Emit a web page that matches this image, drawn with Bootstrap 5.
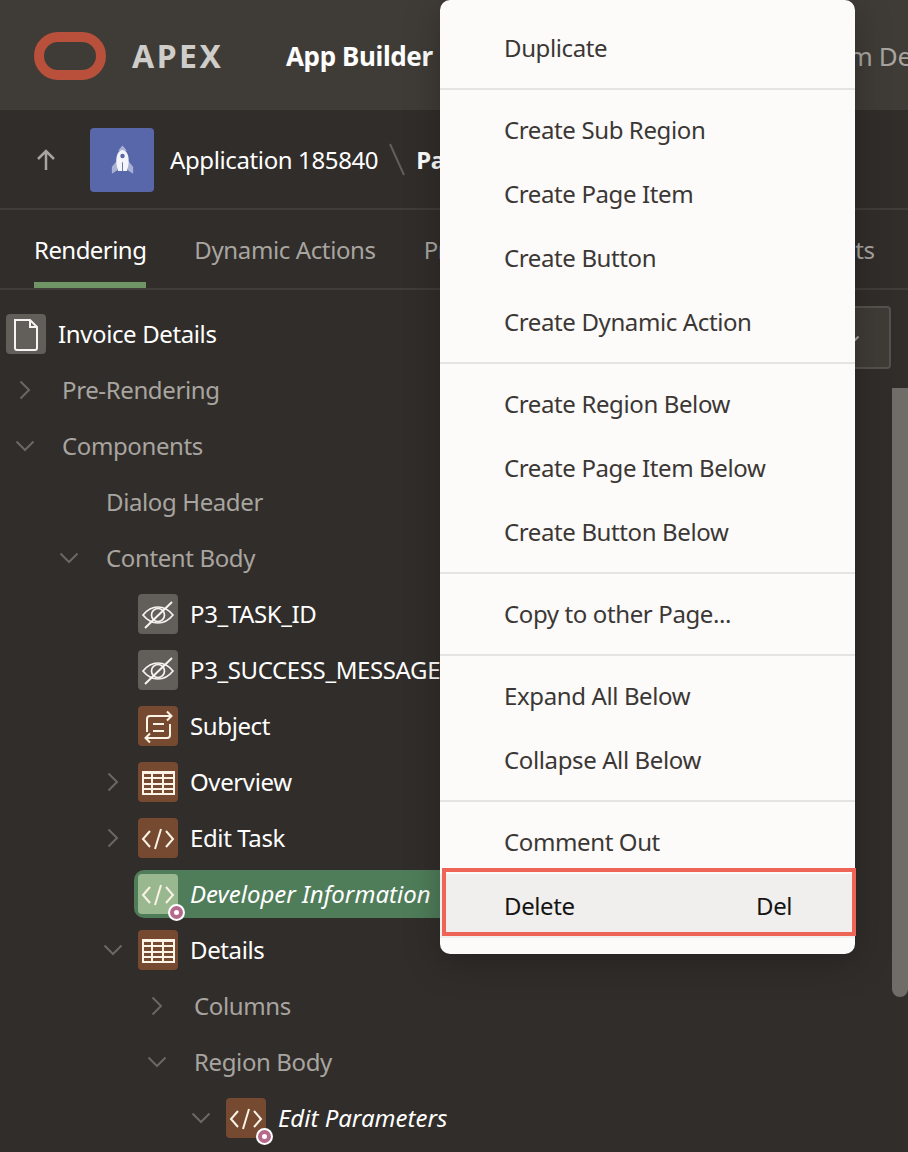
<!DOCTYPE html>
<html lang="en">

<head>
    <meta charset="UTF-8" />
    <meta name="viewport" content="width=device-width, initial-scale=1" />
    <title>APEX Page Designer</title>
    <link href="https://cdn.jsdelivr.net/npm/bootstrap@5.3.2/dist/css/bootstrap.min.css" rel="stylesheet" />
    <style>
        body,
        html {
            margin: 0;
            height: 1152px;
            overflow: hidden;
            background: #312d2a;
        }

        body {
            font-family: "Noto Sans", "Open Sans", sans-serif;
            font-size: 24px;
            letter-spacing: -.38px;
        }

        .page-wrap {
            height: 1152px;
            overflow: hidden;
        }

        .top-bar {
            height: 110px;
            background: #3f3c37;
            padding: 2px 0 0 34px;
            white-space: nowrap;
        }

        .top-bar > * {
            flex: none;
        }

        .apex-name {
            margin-left: 26px;
            font-size: 32px;
            font-weight: 700;
            letter-spacing: 2.500px;
            color: #cfcdc9;
            width: 154px;
        }

        .top-link {
            font-size: 26px;
            font-weight: 700;
            color: #fff;
        }

        .top-link-muted {
            font-size: 26px;
            color: #a8a5a0;
            margin-left: 375px;
        }

        .crumb-bar {
            height: 100px;
            padding-top: 2px;
            border-bottom: 2px solid #403d39;
            white-space: nowrap;
            color: #fff;
        }

        .up-arrow {
            width: 90px;
            padding-left: 36px;
        }

        .app-tile {
            width: 64px;
            height: 64px;
            background: #5867a9;
            border-radius: 4px;
            margin-right: 16px;
        }

        .crumb-slash {
            margin: 0 10px;
        }

        .tab-bar {
            height: 80px;
            padding: 0 34px;
            gap: 48px;
            border-bottom: 2px solid #403d39;
            white-space: nowrap;
        }

        .tab-item {
            color: #a8a5a0;
            height: 78px;
            line-height: 80px;
        }

        .tab-active {
            color: #fff;
            border-bottom: 6px solid #6f9566;
            height: 78px;
            letter-spacing: -.55px;
        }

        .tree-row {
            height: 56px;
            white-space: nowrap;
            color: #fff;
        }

        .tree-row-muted {
            color: #a8a5a0;
        }

        .twist {
            width: 44px;
            flex: none;
            text-align: center;
            line-height: 0;
        }

        .lvl-0 { padding-left: 3px; }
        .lvl-1 { padding-left: 47px; }
        .lvl-2 { padding-left: 91px; }
        .lvl-3 { padding-left: 135px; }
        .lvl-4 { padding-left: 179px; }

        .node-icon {
            width: 40px;
            height: 40px;
            flex: none;
            border-radius: 4px;
            margin-left: 3px;
            margin-right: 12px;
            position: relative;
        }

        .icon-page { background: #625e59; }
        .icon-brown { background: #764a30; }
        .icon-light { background: #9ab890; }

        .plain-label {
            margin-left: 15px;
        }

        .node-italic {
            font-style: italic;
            letter-spacing: 0;
        }

        .node-picked {
            height: 48px;
            width: 320px;
            flex: none;
            margin-left: -1px;
            padding-left: 1px;
            background: #4f7d5a;
            border-radius: 10px 0 0 10px;
        }

        .comment-pin {
            position: absolute;
            right: -7px;
            bottom: -7px;
            width: 17px;
            height: 17px;
            border-radius: 50%;
            background: #fff;
            padding: 2px;
        }

        .comment-pin::after {
            content: "";
            display: block;
            width: 13px;
            height: 13px;
            border-radius: 50%;
            background: #fff;
            border: 4px solid #b56a8c;
        }

        .view-select {
            width: 100px;
            height: 63px;
            margin-right: 17px;
            align-self: flex-start;
            background: #3f3c37;
            border: 2px solid #55524d;
            border-radius: 4px;
            text-align: right;
            padding: 0 29px 0 0;
            line-height: 0;
        }

        .select-chev {
            margin-top: 27px;
        }

        .tree-scroll {
            position: absolute;
            left: 892px;
            top: 388px;
            width: 16px;
            height: 609px;
            background: #706c67;
            border-radius: 0 0 8px 8px;
        }

        .action-menu.dropdown-menu {
            position: absolute;
            left: 440px;
            top: 0;
            width: 415px;
            height: 954px;
            margin: 0;
            padding: 16px 0 0;
            background: #fcfbfa;
            border: 0;
            border-radius: 10px;
            font-size: 24px;
            box-shadow: 0 8px 36px rgba(0, 0, 0, .25);
        }

        .action-menu .dropdown-item {
            height: 64px;
            padding: 0 0 0 64px;
            line-height: 64px;
            color: #3b3734;
        }

        .action-menu .dropdown-divider {
            margin: 8px 0;
            border-top: 2px solid #e5e4e2;
            opacity: 1;
        }

        .action-menu .item-marked {
            position: relative;
            background: #f0efed;
            color: #161513;
        }

        .item-marked::after {
            content: "";
            position: absolute;
            left: 2px;
            right: -1px;
            top: -6px;
            bottom: 2px;
            border: 4px solid #ee6557;
        }

        .key-hint {
            position: absolute;
            left: 316px;
        }
    </style>
</head>

<body class="position-relative">

    <svg width="0" height="0" class="position-absolute">
        <defs>
            <symbol id="chev-right" viewBox="0 0 12 20">
                <path d="M1.500 1.500 10 10l-8.500 8.500" fill="none" stroke="#6b6762" stroke-width="2" />
            </symbol>
            <symbol id="chev-down" viewBox="0 0 20 12">
                <path d="M1.500 1.500 10 10l8.500-8.500" fill="none" stroke="#6b6762" stroke-width="2" />
            </symbol>
            <symbol id="ico-eye" viewBox="0 0 40 40">
                <g fill="none" stroke="#f5f4f2" stroke-width="1.700">
                    <path d="M5 20c4-5 9-8 15-8s11 3 15 8c-4 5-9 8-15 8s-11-3-15-8z" />
                    <circle cx="20" cy="20" r="6.500" />
                    <path d="M7 33 34 7" stroke-width="2" />
                </g>
            </symbol>
            <symbol id="ico-subject" viewBox="0 0 40 40">
                <g fill="none" stroke="#fbf3e6" stroke-width="2">
                    <path d="M9 25V12q0-3 3-3h22M29 4.500 33.500 9 29 13.500" />
                    <path d="M32 17v11q0 3-3 3H7M12 26.500 7.500 31l4.500 4.500" />
                    <path d="M15 17h11M15 24h11" />
                </g>
            </symbol>
            <symbol id="ico-table" viewBox="0 0 40 40">
                <g fill="none" stroke="#fbf3e6" stroke-width="2">
                    <rect x="5" y="9" width="31" height="22" />
                    <path d="M5 15h31M5 21h31M5 26h31M14 11v20M25 11v20" />
                    <path d="M5 10h31" stroke-width="2" />
                </g>
            </symbol>
            <symbol id="ico-code" viewBox="0 0 40 40">
                <g fill="none" stroke="#fbf3e6" stroke-width="2">
                    <path d="M12 12l-7 8 7 8M28 12l7 8-7 8M23 10l-6 20" />
                </g>
            </symbol>
        </defs>
    </svg>

    <div class="page-wrap">
        <!-- header -->
        <nav class="top-bar d-flex align-items-center">
            <svg width="72" height="48" viewBox="0 0 72 48">
                <rect x="5" y="5" width="62" height="38" rx="19" fill="none" stroke="#b9503b" stroke-width="10" />
            </svg>
            <span class="apex-name">APEX</span>
            <span class="top-link">App Builder</span>
            <span class="top-link-muted">Team Development</span>
        </nav>

        <!-- breadcrumb -->
        <div class="crumb-bar d-flex align-items-center">
            <div class="up-arrow d-flex">
                <svg width="20" height="22" viewBox="0 0 20 22">
                    <path d="M10 21V2M2 10l8-8 8 8" fill="none" stroke="#a8a5a0" stroke-width="2.500" />
                </svg>
            </div>
            <div class="app-tile d-flex align-items-center justify-content-center">
                <svg width="23" height="31" viewBox="0 0 26 34">
                    <path d="M7 17 1 24v8l6-4zM19 17l6 7v8l-6-4z" fill="#a9b1d6" />
                    <path d="M13 0 8 6h10z" fill="#a9b1d6" />
                    <path d="M13 5c-4 0-7 5-7 12 0 5 1 9 2 12h10c1-3 2-7 2-12 0-7-3-12-7-12z" fill="#f4f5fb" />
                    <circle cx="13" cy="12" r="2.500" fill="#5867a9" />
                    <path d="M13 19v10" stroke="#5867a9" stroke-width="1" />
                </svg>
            </div>
            <span>Application 185840</span>
            <svg class="crumb-slash" width="18" height="34" viewBox="0 0 18 34">
                <path d="M2 1l14 31" stroke="#625e59" stroke-width="2" />
            </svg>
            <span class="fw-bold">Page 3</span>
        </div>

        <!-- tabs -->
        <div class="tab-bar d-flex">
            <div class="tab-item tab-active">Rendering</div>
            <div class="tab-item">Dynamic Actions</div>
            <div class="tab-item">Processing</div>
            <div class="tab-item">Page Shared Components</div>
        </div>

        <!-- tree -->
        <div class="tree-wrap mt-3">
            <div class="tree-row d-flex align-items-center lvl-0">
                <div class="node-icon icon-page">
                    <svg width="40" height="40" viewBox="0 0 40 40">
                        <path d="M9 5h15l7 7v21q0 2-2 2H11q-2 0-2-2zM24 5v7h7" fill="none" stroke="#f5f4f2" stroke-width="2" />
                    </svg>
                </div>
                <span>Invoice Details</span>
                <div class="btn view-select ms-auto">
                    <svg class="select-chev" width="20" height="12" viewBox="0 0 20 12">
                        <path d="M1.500 1.500 10 10l8.500-8.500" fill="none" stroke="#a8a5a0" stroke-width="2" />
                    </svg>
                </div>
            </div>
            <div class="tree-row tree-row-muted d-flex align-items-center lvl-0">
                <div class="twist"><svg width="12" height="20"><use href="#chev-right" /></svg></div>
                <span class="plain-label">Pre-Rendering</span>
            </div>
            <div class="tree-row tree-row-muted d-flex align-items-center lvl-0">
                <div class="twist"><svg width="20" height="12"><use href="#chev-down" /></svg></div>
                <span class="plain-label">Components</span>
            </div>
            <div class="tree-row tree-row-muted d-flex align-items-center lvl-1">
                <div class="twist"></div>
                <span class="plain-label">Dialog Header</span>
            </div>
            <div class="tree-row tree-row-muted d-flex align-items-center lvl-1">
                <div class="twist"><svg width="20" height="12"><use href="#chev-down" /></svg></div>
                <span class="plain-label">Content Body</span>
            </div>
            <div class="tree-row d-flex align-items-center lvl-2">
                <div class="twist"></div>
                <div class="node-icon icon-page"><svg width="40" height="40"><use href="#ico-eye" /></svg></div>
                <span>P3_TASK_ID</span>
            </div>
            <div class="tree-row d-flex align-items-center lvl-2">
                <div class="twist"></div>
                <div class="node-icon icon-page"><svg width="40" height="40"><use href="#ico-eye" /></svg></div>
                <span>P3_SUCCESS_MESSAGE</span>
            </div>
            <div class="tree-row d-flex align-items-center lvl-2">
                <div class="twist"></div>
                <div class="node-icon icon-brown"><svg width="40" height="40"><use href="#ico-subject" /></svg></div>
                <span>Subject</span>
            </div>
            <div class="tree-row d-flex align-items-center lvl-2">
                <div class="twist"><svg width="12" height="20"><use href="#chev-right" /></svg></div>
                <div class="node-icon icon-brown"><svg width="40" height="40"><use href="#ico-table" /></svg></div>
                <span>Overview</span>
            </div>
            <div class="tree-row d-flex align-items-center lvl-2">
                <div class="twist"><svg width="12" height="20"><use href="#chev-right" /></svg></div>
                <div class="node-icon icon-brown"><svg width="40" height="40"><use href="#ico-code" /></svg></div>
                <span>Edit Task</span>
            </div>
            <div class="tree-row d-flex align-items-center lvl-2">
                <div class="twist"></div>
                <div class="node-picked d-flex align-items-center">
                    <div class="node-icon icon-light">
                        <svg width="40" height="40"><use href="#ico-code" /></svg>
                        <span class="comment-pin"></span>
                    </div>
                    <span class="node-italic">Developer Information</span>
                </div>
            </div>
            <div class="tree-row d-flex align-items-center lvl-2">
                <div class="twist"><svg width="20" height="12"><use href="#chev-down" /></svg></div>
                <div class="node-icon icon-brown"><svg width="40" height="40"><use href="#ico-table" /></svg></div>
                <span>Details</span>
            </div>
            <div class="tree-row tree-row-muted d-flex align-items-center lvl-3">
                <div class="twist"><svg width="12" height="20"><use href="#chev-right" /></svg></div>
                <span class="plain-label">Columns</span>
            </div>
            <div class="tree-row tree-row-muted d-flex align-items-center lvl-3">
                <div class="twist"><svg width="20" height="12"><use href="#chev-down" /></svg></div>
                <span class="plain-label">Region Body</span>
            </div>
            <div class="tree-row d-flex align-items-center lvl-4">
                <div class="twist"><svg width="20" height="12"><use href="#chev-down" /></svg></div>
                <div class="node-icon icon-brown">
                    <svg width="40" height="40"><use href="#ico-code" /></svg>
                    <span class="comment-pin"></span>
                </div>
                <span class="node-italic">Edit Parameters</span>
            </div>
        </div>
    </div>

    <div class="tree-scroll"></div>

    <!-- context menu -->
    <ul class="dropdown-menu show action-menu list-unstyled">
        <li><a class="dropdown-item">Duplicate</a></li>
        <li><hr class="dropdown-divider" /></li>
        <li><a class="dropdown-item">Create Sub Region</a></li>
        <li><a class="dropdown-item">Create Page Item</a></li>
        <li><a class="dropdown-item">Create Button</a></li>
        <li><a class="dropdown-item">Create Dynamic Action</a></li>
        <li><hr class="dropdown-divider" /></li>
        <li><a class="dropdown-item">Create Region Below</a></li>
        <li><a class="dropdown-item">Create Page Item Below</a></li>
        <li><a class="dropdown-item">Create Button Below</a></li>
        <li><hr class="dropdown-divider" /></li>
        <li><a class="dropdown-item">Copy to other Page...</a></li>
        <li><hr class="dropdown-divider" /></li>
        <li><a class="dropdown-item">Expand All Below</a></li>
        <li><a class="dropdown-item">Collapse All Below</a></li>
        <li><hr class="dropdown-divider" /></li>
        <li><a class="dropdown-item">Comment Out</a></li>
        <li><a class="dropdown-item item-marked">Delete<span class="key-hint">Del</span></a></li>
    </ul>

    <script src="https://cdn.jsdelivr.net/npm/bootstrap@5.3.2/dist/js/bootstrap.bundle.min.js"></script>
</body>

</html>
